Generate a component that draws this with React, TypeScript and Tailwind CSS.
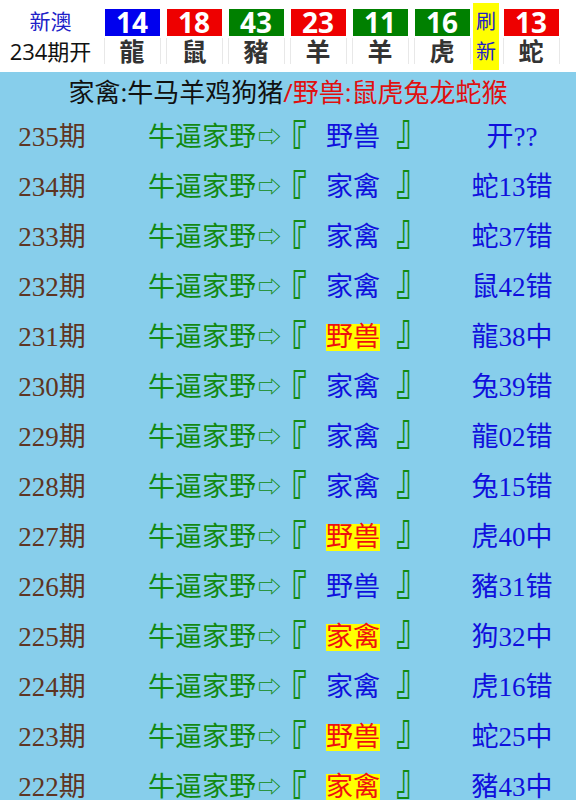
import React from "react";

type Ball = { num: string; animal: string; color: string };

const balls: Ball[] = [
  { num: "14", animal: "龍", color: "bg-[#0000ee]" },
  { num: "18", animal: "鼠", color: "bg-[#ee0000]" },
  { num: "43", animal: "豬", color: "bg-[#008000]" },
  { num: "23", animal: "羊", color: "bg-[#ee0000]" },
  { num: "11", animal: "羊", color: "bg-[#008000]" },
  { num: "16", animal: "虎", color: "bg-[#008000]" },
];

type Row = { period: string; pick: string; hit: boolean; result: string };

const rows: Row[] = [
  { period: "235", pick: "野兽", hit: false, result: "开??" },
  { period: "234", pick: "家禽", hit: false, result: "蛇13错" },
  { period: "233", pick: "家禽", hit: false, result: "蛇37错" },
  { period: "232", pick: "家禽", hit: false, result: "鼠42错" },
  { period: "231", pick: "野兽", hit: true, result: "龍38中" },
  { period: "230", pick: "家禽", hit: false, result: "兔39错" },
  { period: "229", pick: "家禽", hit: false, result: "龍02错" },
  { period: "228", pick: "家禽", hit: false, result: "兔15错" },
  { period: "227", pick: "野兽", hit: true, result: "虎40中" },
  { period: "226", pick: "野兽", hit: false, result: "豬31错" },
  { period: "225", pick: "家禽", hit: true, result: "狗32中" },
  { period: "224", pick: "家禽", hit: false, result: "虎16错" },
  { period: "223", pick: "野兽", hit: true, result: "蛇25中" },
  { period: "222", pick: "家禽", hit: true, result: "豬43中" },
];

const sans = "font-['Open_Sans','Noto_Sans_CJK_SC',sans-serif]";
const serif = "font-['Liberation_Serif','Noto_Sans_CJK_SC',serif]";

function BallCell({ ball }: { ball: Ball }) {
  return (
    <div className="flex w-[62px] flex-col items-center px-[3px]">
      <div
        className={`mt-[9px] flex h-[27px] w-[55px] items-center justify-center ${ball.color} text-[28px] font-bold leading-[27px] text-white`}
      >
        {ball.num}
      </div>
      <div className="mt-[2px] flex h-[26px] w-[57px] items-center justify-center border-x border-[#e8e8e8] text-[25px] font-bold leading-[26px] text-[#333]">
        {ball.animal}
      </div>
    </div>
  );
}

export default function App() {
  return (
    <div className="h-[800px] w-[576px] overflow-hidden bg-[#87ceeb]">
      <div className={`flex h-[72px] bg-white ${sans}`}>
        <div className="flex w-[101px] flex-col items-center">
          <div className="mt-[7px] text-[21px] leading-[28px] text-[#2020c8]">新澳</div>
          <div className="mt-[2px] text-[22px] leading-[28px] text-[#111]">234期开</div>
        </div>
        {balls.map((b, i) => (
          <BallCell key={i} ball={b} />
        ))}
        <div className="mt-[3px] flex h-[67px] w-[26px] flex-col items-center justify-center bg-[#ffff00] text-[20px] leading-[30px] text-[#2020c8]">
          <span>刷</span>
          <span>新</span>
        </div>
        <div className="ml-[1px]">
          <BallCell ball={{ num: "13", animal: "蛇", color: "bg-[#ee0000]" }} />
        </div>
      </div>

      <div className={`flex h-[40px] items-center justify-center text-[26px] leading-none ${sans}`}>
        <span className="text-[#111]">家禽:牛马羊鸡狗猪</span>
        <span className="text-[#e01010]">/野兽:鼠虎兔龙蛇猴</span>
      </div>

      <div className={serif}>
        {rows.map((r) => (
          <div key={r.period} className="flex h-[50px] items-center text-[27px] leading-none">
            <div className="w-[104px] text-center text-[#5e3422]">{r.period}期</div>
            <div className="flex w-[344px] items-center pl-[44px] text-[#128a12]">
              <span>牛逼家野</span>
              <span className="ml-[2px] text-[23px]">⇨</span>
              <span className="-ml-[4px] inline-block origin-center translate-y-[6px] scale-x-[1.2] scale-y-[1.6] font-bold">
                『
              </span>
              <span
                className={`ml-[22px] ${r.hit ? "bg-[#ffff00] text-[#ee1010]" : "text-[#1010dd]"}`}
              >
                {r.pick}
              </span>
              <span className="ml-[19px] inline-block origin-center -translate-y-[6px] scale-x-[1.2] scale-y-[1.6] font-bold">
                』
              </span>
            </div>
            <div className="w-[128px] text-center text-[#1010dd]">{r.result}</div>
          </div>
        ))}
      </div>
    </div>
  );
}
